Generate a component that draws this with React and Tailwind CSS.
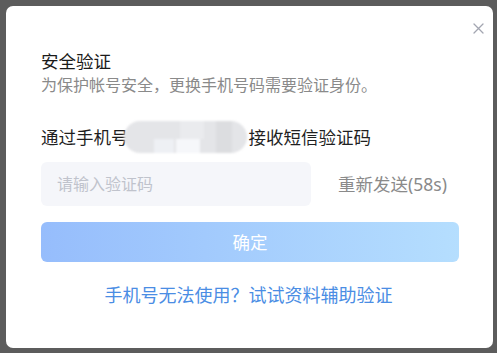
import React from 'react';

const font = { fontFamily: '"Noto Sans", "Noto Sans CJK SC", sans-serif' };

export default function App() {
    return (
        <div className="w-[497px] h-[353px] bg-[#5c5c5c] pl-[6px] pt-[6px] pr-[4px] pb-[5px]" style={font}>
            <div className="relative h-full bg-white rounded-[7px] px-[35px] pt-[43px] flex flex-col">
                {/* close */}
                <button className="absolute top-[16px] right-[9px] w-[12px] h-[12px] flex items-center justify-center">
                    <svg width="11" height="11" viewBox="0 0 11 11">
                        <path d="M1 1 L10 10 M10 1 L1 10" stroke="#a3a6b1" strokeWidth="1.3" strokeLinecap="round" />
                    </svg>
                </button>

                <div className="text-[17.5px] leading-[24px] text-[#1a1a1a]">安全验证</div>
                <div className="text-[16px] leading-[24px] text-[#8a8a8a]">为保护帐号安全，更换手机号码需要验证身份。</div>

                <div className="mt-[27px] h-[26px] flex items-center text-[17.5px] leading-[26px] text-[#1f1f1f]">
                    <span>通过手机号</span>
                    <span className="relative -ml-[5px] mr-[2px] -my-[3px] w-[123px] h-[32px] shrink-0 rounded-full overflow-hidden bg-[#e4e5e8] blur-[1px]">
                        <span className="absolute left-[30px] top-[18px] w-[20px] h-[14px] bg-[#eef0f4]" />
                        <span className="absolute left-[52px] top-[18px] w-[24px] h-[14px] bg-[#f6f7fa]" />
                        <span className="absolute left-[56px] top-0 w-[24px] h-[18px] bg-[#eaebee]" />
                        <span className="absolute left-[92px] top-0 w-[16px] h-[32px] bg-[#dcdde0]" />
                    </span>
                    <span>接收短信验证码</span>
                </div>

                <div className="mt-[12px] flex items-center">
                    <div className="w-[270px] h-[44px] rounded-[6px] bg-[#f5f6fa] flex items-center pl-[16px] text-[16px] text-[#c0c3cc]">
                        请输入验证码
                    </div>
                    <div className="ml-[27px] text-[17.5px] text-[#8a8a8a]">重新发送(58s)</div>
                </div>

                <button className="mt-[16px] w-[418px] h-[40px] rounded-[6px] bg-gradient-to-r from-[#96bdfc] to-[#b5defe] text-white text-[17.5px] flex items-center justify-center">
                    确定
                </button>

                <div className="mt-[20px] text-center text-[18px] leading-[26px] text-[#4a8de4] pr-[2px]">
                    手机号无法使用？试试资料辅助验证
                </div>
            </div>
        </div>
    );
}
